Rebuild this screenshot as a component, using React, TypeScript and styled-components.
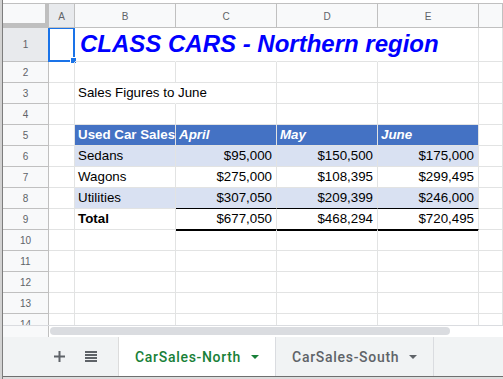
import React from "react";
import styled, { createGlobalStyle, css } from "styled-components";

const GlobalStyle = createGlobalStyle`
  html, body {
    margin: 0;
    padding: 0;
    background: #ffffff;
  }
  body {
    font-family: "Liberation Sans", Arial, sans-serif;
  }
  * {
    box-sizing: border-box;
  }
`;

const COLS = "46px 26px repeat(4, 101px) 1fr";
const GRID = "#e2e3e3";
const HEAD_LINE = "#c0c0c0";
const HEAD_BG = "#f8f9fa";
const HEAD_SEL = "#e8eaed";

const Frame = styled.div`
  width: 503px;
  height: 379px;
  display: flex;
  overflow: hidden;
  background: #ffffff;
`;

const LeftEdge = styled.div`
  flex: none;
  width: 3px;
  background: #d2d2d2;
  border-right: 1px solid #7d7d7d;
`;

const SheetWindow = styled.div`
  flex: 1;
  min-width: 0;
  display: flex;
  flex-direction: column;
`;

const TopGap = styled.div`
  flex: none;
  height: 3px;
`;

const ColumnHeaderRow = styled.div`
  flex: none;
  display: grid;
  grid-template-columns: ${COLS};
  height: 25px;
  border-top: 1px solid ${HEAD_LINE};
  background: ${HEAD_BG};
`;

const Corner = styled.div`
  background: ${HEAD_BG};
  border-right: 4px solid #bfbfbf;
  border-bottom: 5px solid #bfbfbf;
`;

const headerText = css`
  display: flex;
  align-items: center;
  justify-content: center;
  font-size: 10px;
  color: #5f6368;
`;

const ColumnHead = styled.div<{ $selected?: boolean }>`
  ${headerText};
  background: ${(p) => (p.$selected ? HEAD_SEL : HEAD_BG)};
  border-right: 1px solid ${HEAD_LINE};
  border-bottom: 1px solid ${HEAD_LINE};
  padding-top: 1px;
`;

const Body = styled.div`
  flex: none;
  height: 297px;
  overflow: hidden;
`;

const SheetRow = styled.div<{ $height: number }>`
  display: grid;
  grid-template-columns: ${COLS};
  height: ${(p) => p.$height}px;
`;

const RowHead = styled.div<{ $selected?: boolean }>`
  ${headerText};
  background: ${(p) => (p.$selected ? HEAD_SEL : HEAD_BG)};
  border-right: 1px solid ${HEAD_LINE};
  border-bottom: 1px solid ${HEAD_LINE};
`;

type CellProps = {
  $bg?: string;
  $color?: string;
  $bold?: boolean;
  $italic?: boolean;
  $right?: boolean;
  $open?: boolean;
  $ruleBelow?: boolean;
  $thickBelow?: boolean;
};

const Cell = styled.div<CellProps>`
  position: relative;
  display: flex;
  align-items: flex-end;
  justify-content: ${(p) => (p.$right ? "flex-end" : "flex-start")};
  padding: 0 4px 4px 3px;
  background: ${(p) => p.$bg ?? "transparent"};
  color: ${(p) => p.$color ?? "#000000"};
  font-size: 13.33px;
  line-height: 13px;
  font-weight: ${(p) => (p.$bold ? 700 : 400)};
  font-style: ${(p) => (p.$italic ? "italic" : "normal")};
  white-space: nowrap;
  border-right: 1px solid ${(p) => (p.$open ? "transparent" : GRID)};
  border-bottom: 1px solid
    ${(p) => (p.$ruleBelow || p.$thickBelow ? "#000000" : GRID)};
  ${(p) =>
    p.$thickBelow &&
    css`
      box-shadow: 0 1px 0 #000000;
    `}
`;

const Title = styled.span`
  font-size: 24px;
  line-height: 24px;
  font-weight: 700;
  font-style: italic;
  color: #0000ff;
  margin-bottom: 1px;
  margin-left: 2px;
`;

const Selection = styled.div`
  position: absolute;
  inset: -1px -1px -1px -1px;
  border: 2px solid #1a73e8;
  pointer-events: none;
`;

const FillHandle = styled.div`
  position: absolute;
  right: -4px;
  bottom: -4px;
  width: 7px;
  height: 7px;
  background: #1a73e8;
  border: 1px solid #ffffff;
`;

const ScrollRow = styled.div`
  flex: none;
  display: flex;
  height: 12px;
  border-top: 1px solid #dadce0;
`;

const ScrollHead = styled.div`
  flex: none;
  width: 46px;
  background: ${HEAD_BG};
  border-right: 1px solid ${HEAD_LINE};
`;

const ScrollTrack = styled.div`
  flex: 1;
  padding: 1px 0 2px 1px;
`;

const ScrollThumb = styled.div`
  width: 400px;
  height: 100%;
  border-radius: 5px;
  background: #dadce0;
`;

const TabBar = styled.div`
  flex: none;
  display: flex;
  height: 39px;
  background: #f1f3f4;
`;

const Controls = styled.div`
  flex: none;
  width: 116px;
  display: flex;
  align-items: center;
  gap: 8px;
  padding-left: 44px;
  border-right: 1px solid #dcdcdc;
`;

const IconButton = styled.div`
  width: 24px;
  height: 24px;
  display: flex;
  align-items: center;
  justify-content: center;
  color: #5f6368;
`;

const Tab = styled.div<{ $active?: boolean }>`
  flex: none;
  display: flex;
  align-items: center;
  gap: 10px;
  padding: 0 16px 0 16px;
  background: ${(p) => (p.$active ? "#ffffff" : "transparent")};
  color: ${(p) => (p.$active ? "#188038" : "#5f6368")};
  border-right: 1px solid #dadce0;
  font-family: Roboto, "Liberation Sans", Arial, sans-serif;
  font-size: 14px;
  font-weight: 500;
`;

const TabLabel = styled.span`
  letter-spacing: 0.7px;
`;

const BottomEdge = styled.div`
  flex: none;
  height: 3px;
  border-top: 1px solid #6f6f6f;
  background: #dcdcdc;
`;

const PlusIcon = () => (
  <svg width="11" height="11" viewBox="0 0 11 11" fill="currentColor">
    <rect x="4.5" y="0" width="2" height="11" />
    <rect x="0" y="4.5" width="11" height="2" />
  </svg>
);

const ListIcon = () => (
  <svg width="12" height="11" viewBox="0 0 12 11" fill="currentColor">
    <rect x="0" y="0" width="12" height="2" />
    <rect x="0" y="3" width="12" height="2" />
    <rect x="0" y="6" width="12" height="2" />
    <rect x="0" y="9" width="12" height="2" />
  </svg>
);

const Caret = () => (
  <svg width="8" height="4" viewBox="0 0 8 4" fill="currentColor">
    <path d="M0 0h8L4 4z" />
  </svg>
);

const BAND = "#d9e1f2";
const HEAD_FILL = "#4472c4";

type TableRow = {
  n: number;
  kind: "head" | "band" | "plain" | "total";
  label: string;
  values: string[];
};

const tableRows: TableRow[] = [
  { n: 5, kind: "head", label: "Used Car Sales", values: ["April", "May", "June"] },
  { n: 6, kind: "band", label: "Sedans", values: ["$95,000", "$150,500", "$175,000"] },
  { n: 7, kind: "plain", label: "Wagons", values: ["$275,000", "$108,395", "$299,495"] },
  { n: 8, kind: "band", label: "Utilities", values: ["$307,050", "$209,399", "$246,000"] },
  { n: 9, kind: "total", label: "Total", values: ["$677,050", "$468,294", "$720,495"] },
];

const columns = ["A", "B", "C", "D", "E", ""];

const EmptyRow = ({ n, height = 21 }: { n: number; height?: number }) => (
  <SheetRow $height={height}>
    <RowHead>{n}</RowHead>
    {columns.map((c) => (
      <Cell key={c} />
    ))}
  </SheetRow>
);

const DataRow = ({ row }: { row: TableRow }) => {
  const head = row.kind === "head";
  const bg = head ? HEAD_FILL : row.kind === "band" ? BAND : undefined;
  const color = head ? "#ffffff" : undefined;
  return (
    <SheetRow $height={21}>
      <RowHead>{row.n}</RowHead>
      <Cell />
      <Cell $bg={bg} $color={color} $bold={head || row.kind === "total"}>
        {row.label}
      </Cell>
      {row.values.map((v) => (
        <Cell
          key={v}
          $bg={bg}
          $color={color}
          $bold={head}
          $italic={head}
          $right={!head}
          $ruleBelow={row.n === 8}
          $thickBelow={row.kind === "total"}
        >
          {v}
        </Cell>
      ))}
      <Cell />
    </SheetRow>
  );
};

export default function App() {
  return (
    <>
      <GlobalStyle />
      <Frame>
        <LeftEdge />
        <SheetWindow>
          <TopGap />
          <ColumnHeaderRow>
            <Corner />
            {columns.map((c, i) => (
              <ColumnHead key={i} $selected={c === "A"}>
                {c}
              </ColumnHead>
            ))}
          </ColumnHeaderRow>

          <Body>
            <SheetRow $height={34}>
              <RowHead $selected>1</RowHead>
              <Cell>
                <Selection>
                  <FillHandle />
                </Selection>
              </Cell>
              <Cell $open>
                <Title>CLASS CARS - Northern region</Title>
              </Cell>
              <Cell $open />
              <Cell $open />
              <Cell />
              <Cell />
            </SheetRow>
            <EmptyRow n={2} />
            <SheetRow $height={21}>
              <RowHead>3</RowHead>
              <Cell />
              <Cell $open>Sales Figures to June</Cell>
              <Cell />
              <Cell />
              <Cell />
              <Cell />
            </SheetRow>
            <EmptyRow n={4} />
            {tableRows.map((r) => (
              <DataRow key={r.n} row={r} />
            ))}
            {[10, 11, 12, 13, 14].map((n) => (
              <EmptyRow key={n} n={n} />
            ))}
          </Body>

          <ScrollRow>
            <ScrollHead />
            <ScrollTrack>
              <ScrollThumb />
            </ScrollTrack>
          </ScrollRow>

          <TabBar>
            <Controls>
              <IconButton>
                <PlusIcon />
              </IconButton>
              <IconButton>
                <ListIcon />
              </IconButton>
            </Controls>
            <Tab $active>
              <TabLabel>CarSales-North</TabLabel>
              <Caret />
            </Tab>
            <Tab>
              <TabLabel>CarSales-South</TabLabel>
              <Caret />
            </Tab>
          </TabBar>
          <BottomEdge />
        </SheetWindow>
      </Frame>
    </>
  );
}
